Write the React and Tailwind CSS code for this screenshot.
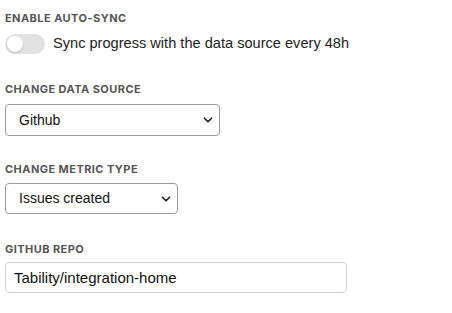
import React, { useState } from 'react';
import { ChevronDown } from 'lucide-react';

const Label = ({ children }) => (
  <div className="h-[14px] text-[11px] font-bold uppercase tracking-[0.04em] text-[#555] leading-[14px] font-['Inter',sans-serif]">
    {children}
  </div>
);

const Select = ({ value, width, height }) => (
  <div className={`relative ${width} ${height} rounded-[4px] border border-[#9a9a9a] bg-white flex items-center pl-[13px] pr-[4px] text-[14px] text-[#111]`}>
    <span className="flex-1">{value}</span>
    <ChevronDown size={14} strokeWidth={3} className="text-[#222]" />
  </div>
);

export default function App() {
  const [sync, setSync] = useState(false);

  return (
    <div className="w-[452px] h-[313px] bg-white px-[5px] pt-[11px] font-['Liberation_Sans',Arial,sans-serif]">
      {/* Auto-sync */}
      <Label>Enable auto-sync</Label>
      <div className="mt-[9px] h-[20px] flex items-center gap-[8px]">
        <button
          onClick={() => setSync(!sync)}
          className="w-[40px] h-[20px] rounded-full bg-[#e2e2e2] flex items-center px-[2px]"
        >
          <span className="w-[16px] h-[16px] rounded-full bg-white shadow-[0_1px_2px_rgba(0,0,0,0.2)]" />
        </button>
        <span className="text-[14.6px] text-[#222] whitespace-nowrap">Sync progress with the data source every 48h</span>
      </div>

      {/* Data source */}
      <div className="mt-[28px]">
        <Label>Change data source</Label>
        <div className="mt-[8px]">
          <Select value="Github" width="w-[215px]" height="h-[32px]" />
        </div>
      </div>

      {/* Metric type */}
      <div className="mt-[26px]">
        <Label>Change metric type</Label>
        <div className="mt-[7px]">
          <Select value="Issues created" width="w-[173px]" height="h-[31px]" />
        </div>
      </div>

      {/* Repo */}
      <div className="mt-[28px]">
        <Label>Github repo</Label>
        <input
          defaultValue="Tability/integration-home"
          className="block mt-[6px] w-[342px] h-[31px] rounded-[4px] border border-[#d0d0d0] px-[8px] text-[15px] text-[#111] outline-none"
        />
      </div>
    </div>
  );
}
